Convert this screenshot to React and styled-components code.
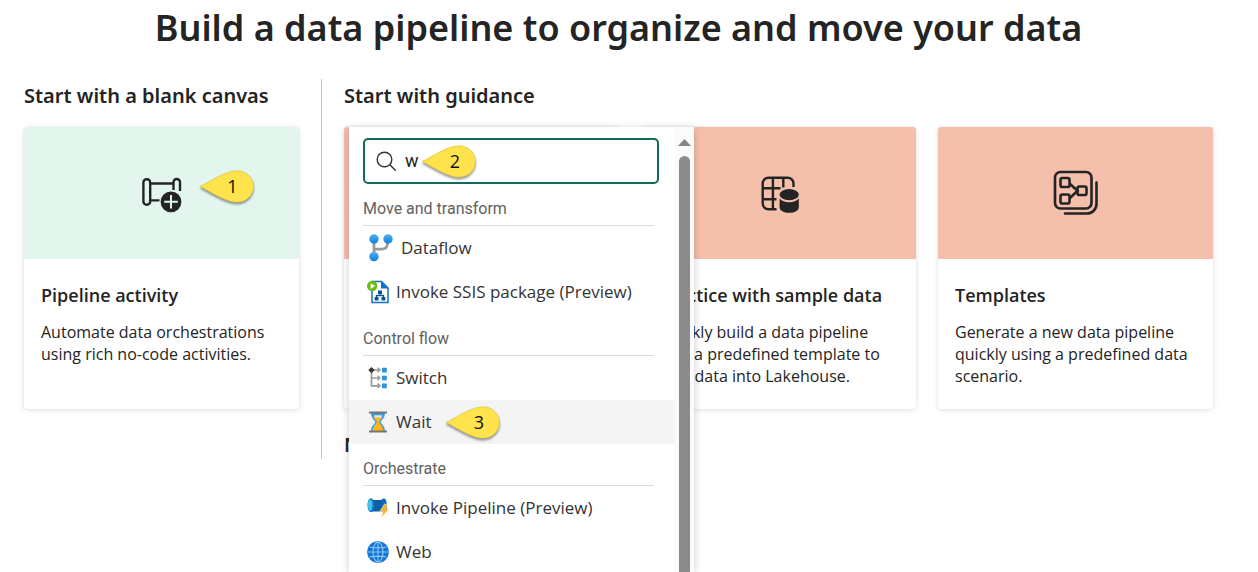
import React, { useState } from 'react';
import styled, { createGlobalStyle } from 'styled-components';

const GlobalStyle = createGlobalStyle`
  *, *::before, *::after { box-sizing: border-box; }
  body { margin: 0; background: #fff; color: #242424; font-family: 'Open Sans', 'Noto Sans', sans-serif; }
  h1, h2, h3, p, ul { margin: 0; padding: 0; }
`;

const Page = styled.main`
  min-height: 100vh;
  padding: 4px 45px 0 24px;
  overflow: hidden;
`;

const Title = styled.h1`
  font: 600 36px/48px 'Noto Sans', 'Open Sans', sans-serif;
  text-align: center;
  margin-bottom: 27px;
`;

const Columns = styled.div`
  display: grid;
  grid-template-columns: minmax(0, 1fr) 1px repeat(3, minmax(0, 1fr));
  column-gap: 22px;
`;

const Divider = styled.div`
  background: #c8c8c8;
`;

const Section = styled.section`
  grid-column: span ${(p) => p.$span};
  display: grid;
  grid-template-columns: subgrid;
  align-content: start;
  padding-top: 3px;
`;

const SectionTitle = styled.h2`
  grid-column: 1 / -1;
  font: 600 20px/28px 'Noto Sans', 'Open Sans', sans-serif;
  margin-bottom: ${(p) => (p.$last ? 0 : 17)}px;
`;

const CardRow = styled.div`
  position: relative;
  grid-column: 1 / -1;
  display: grid;
  grid-template-columns: subgrid;
  margin-bottom: 22px;
`;

const Card = styled.article`
  display: flex;
  flex-direction: column;
  min-height: 282px;
  border-radius: 3px;
  background: #fff;
  box-shadow: 0 0 2px rgba(0, 0, 0, 0.1), 0 1px 6px rgba(0, 0, 0, 0.1);
`;

const Hero = styled.div`
  position: relative;
  display: flex;
  align-items: center;
  justify-content: center;
  height: 132px;
  padding-top: 4px;
  border-radius: 3px 3px 0 0;
  background: ${(p) => p.$color};
`;

const CardBody = styled.div`
  display: flex;
  flex-direction: column;
  gap: 13px;
  padding: 23px 16px 22px 17px;
`;

const CardTitle = styled.h3`
  font-size: 18px;
  font-weight: 600;
  line-height: 26px;
`;

const CardText = styled.p`
  font-size: 16px;
  line-height: 22px;
`;

const Menu = styled.div`
  position: absolute;
  z-index: 1;
  top: 0;
  left: 5px;
  width: 345px;
  height: calc(100vh - 127px);
  display: flex;
  overflow: hidden;
  background: #fff;
  box-shadow: 0 2px 8px rgba(0, 0, 0, 0.2);
`;

const MenuContent = styled.div`
  flex: 1;
  padding-top: 11px;
`;

const SearchBox = styled.label`
  position: relative;
  display: flex;
  align-items: center;
  gap: 8px;
  height: 46px;
  margin: 0 16px 0 14px;
  padding: 0 11px;
  border: 2px solid #0f6b5b;
  border-radius: 5px;
  background: #fff;
`;

const SearchInput = styled.input`
  flex: 1;
  min-width: 0;
  padding: 0;
  border: 0;
  outline: 0;
  background: transparent;
  color: #242424;
  font: 18px/24px Roboto, sans-serif;
`;

const GroupTitle = styled.h3`
  height: 42px;
  margin: 0 21px 0 14px;
  padding-top: 14px;
  border-bottom: 1px solid #dcdcdc;
  color: #616161;
  font: 400 16px/22px Roboto, sans-serif;
`;

const List = styled.ul`
  list-style: none;
`;

const Item = styled.li`
  position: relative;
`;

const ItemButton = styled.button`
  display: flex;
  align-items: center;
  gap: 7px;
  width: 100%;
  height: 44px;
  padding: 0 0 0 18px;
  border: 0;
  background: ${(p) => (p.$active ? '#f4f4f4' : '#fff')};
  color: #333;
  font: 400 17px/24px 'Open Sans', 'Noto Sans', sans-serif;
  text-align: left;
  white-space: nowrap;
  cursor: pointer;
`;

const Scrollbar = styled.div`
  display: flex;
  flex-direction: column;
  align-items: center;
  gap: 10px;
  width: 19px;
  padding: 12px 0 0 0;
  background: #fbfbfb;
`;

const ScrollUp = styled.button`
  display: flex;
  padding: 0;
  border: 0;
  background: none;
`;

const Thumb = styled.div`
  flex: 1;
  width: 11px;
  border-radius: 6px 6px 0 0;
  background: #8b8b8b;
`;

const Pin = styled.span`
  position: absolute;
  top: ${(p) => p.$top};
  left: ${(p) => p.$left};
  width: 54px;
  height: 34px;
  padding-left: 12px;
  color: #111;
  font: 18px/32px 'Open Sans', sans-serif;
  text-align: center;
`;

const PinShape = styled.svg`
  position: absolute;
  inset: 0;
  overflow: visible;
  filter: drop-shadow(0 2px 1px rgba(0, 0, 0, 0.4));
`;

const PinLabel = styled.span`
  position: relative;
`;

function Callout({ n, top, left }) {
  return (
    <Pin $top={top} $left={left}>
      <PinShape width="54" height="34" viewBox="0 0 54 34" aria-hidden="true">
        <path d="M0 16.500C9 12.500 25 .8 37 .8C46.500 .8 53.500 8 53.500 16.500S46.500 32.200 37 32.200C25 32.200 9 20.500 0 16.500Z" fill="#fee34c" stroke="#d9bf3a" strokeWidth=".6" />
      </PinShape>
      <PinLabel>{n}</PinLabel>
    </Pin>
  );
}

const PipelineIcon = () => (
  <svg width="40" height="36" viewBox="0 0 40 36" fill="none" stroke="#242424" strokeWidth="2.400" aria-hidden="true">
    <rect x="1.400" y="2.200" width="6.800" height="25.500" rx="3.200" />
    <path d="M8 6.500H31.500M8 23.400H17.500" />
    <path d="M31.500 13V5.200A3.200 3.200 0 0 1 38 5.200V14" />
    <circle cx="29" cy="24.800" r="10.400" fill="#242424" stroke="none" />
    <path d="M29 18V31.600M22.200 24.800H35.800" stroke="#e2f6ee" strokeWidth="2" />
  </svg>
);

const SampleIcon = () => (
  <svg width="40" height="38" viewBox="-1.500 0 40 38" fill="none" stroke="#242424" strokeWidth="2.400" aria-hidden="true">
    <path d="M33 11V7.500A5.800 5.800 0 0 0 27.200 1.700H8A5.800 5.800 0 0 0 2.200 7.500V27.500A5.800 5.800 0 0 0 8 33.300H16" />
    <path d="M12.400 2V33M22.800 2V11.500M2 12.200H20M2 23.200H16" />
    <g fill="#242424" stroke="none">
      <ellipse cx="28.700" cy="18.600" rx="9.600" ry="5.600" />
      <path d="M19.100 22.600C22.400 27.500 35 27.500 38.300 22.600V31.500C38.300 34.600 34 36.800 28.700 36.800S19.100 34.600 19.100 31.500Z" />
    </g>
  </svg>
);

const TemplatesIcon = () => (
  <svg width="46" height="50" viewBox="0 0 46 50" fill="none" stroke="#242424" strokeWidth="2.600" aria-hidden="true">
    <rect x="2" y="2" width="36.500" height="36.500" rx="5.500" />
    <path d="M43.500 12.500V34A9.500 9.500 0 0 1 34 43.500H12" strokeLinecap="round" />
    <rect x="7.500" y="8" width="9" height="9" rx="1.800" />
    <rect x="7.500" y="24.500" width="9" height="9" rx="1.800" />
    <rect x="24.500" y="16.500" width="9" height="8.500" rx="1.800" />
    <path d="M16.500 13.500L24.500 20.800L16.500 28.500" />
  </svg>
);

const SearchIcon = () => (
  <svg width="21" height="21" viewBox="0 0 21 21" fill="none" stroke="#333" strokeWidth="1.400" aria-hidden="true">
    <circle cx="8.500" cy="8.500" r="7.300" />
    <path d="M13.800 13.800L19.800 19.800" />
  </svg>
);

const DataflowIcon = () => (
  <svg width="27" height="28" viewBox="0 0 27 28" aria-hidden="true">
    <defs>
      <linearGradient id="node" x1="0" y1="0" x2="0" y2="1">
        <stop offset="0" stopColor="#4bb0f4" />
        <stop offset="1" stopColor="#1680dc" />
      </linearGradient>
    </defs>
    <path d="M7 5V23M7 15.200H14.500Q20.500 15.200 20.500 9V5" fill="none" stroke="#999" strokeWidth="2.700" />
    <circle cx="7" cy="5" r="4.700" fill="url(#node)" />
    <circle cx="21" cy="5" r="4.700" fill="url(#node)" />
    <circle cx="7" cy="22.600" r="4.700" fill="url(#node)" />
  </svg>
);

const SsisIcon = () => (
  <svg width="22" height="24" viewBox="0 0 22 24" aria-hidden="true">
    <path d="M5 1.500H14.500L21 8V22.500H5Z" fill="#fff" stroke="#1372c8" strokeWidth="1.500" />
    <path d="M14 1V8.500H21.500Z" fill="#1372c8" />
    <path d="M13 13V15.500M9.500 18V15.500H16.500V18" fill="none" stroke="#0c4f96" strokeWidth="1.300" />
    <path d="M11 10.500H15V14H11ZM7.700 17H11.500V20.500H7.700ZM14.500 17H18.300V20.500H14.500Z" fill="#0c4f96" />
    <circle cx="5.200" cy="6" r="5.200" fill="#6fbb1e" />
    <path d="M3.600 3.200L8.200 6L3.600 8.800Z" fill="#fff" />
  </svg>
);

const SwitchIcon = () => (
  <svg width="22" height="22" viewBox="0 0 22 22" aria-hidden="true">
    <path d="M4.500 3V18.800H12M4.500 11H12M4.500 3H12" fill="none" stroke="#999" strokeWidth="1.700" />
    <path d="M10.500 .8L13 3L10.500 5.200M10.500 8.800L13 11L10.500 13.200M10.500 16.600L13 18.800L10.500 21" fill="none" stroke="#999" strokeWidth="1.400" />
    <path d="M4.500 0L7.700 3L4.500 6.200L1.300 3Z" fill="#333" />
    <path d="M15 .8H19.800V5.400H15ZM15 8.700H19.800V13.300H15ZM15 16.600H19.800V21.200H15Z" fill="#2b93e4" />
  </svg>
);

const WaitIcon = () => (
  <svg width="22" height="22" viewBox="0 0 22 22" aria-hidden="true">
    <path d="M4 2H18C18 7 14.500 9 13.500 11C14.500 13 18 15 18 20H4C4 15 7.500 13 8.500 11C7.500 9 4 7 4 2Z" fill="#3c9be8" />
    <path d="M6.500 5.500H15.500C15 8 12.600 9 12 11C12.600 12.800 16 15 16.500 20H5.500C6 15 9.400 12.800 10 11C9.400 9 7 8 6.500 5.500Z" fill="#fdb714" />
    <path d="M7 4.200H15L14.200 6.500H7.800Z" fill="#d7ecfb" />
    <path d="M2 .6H20V2.600H2ZM2 19.400H20V21.400H2Z" fill="#777" />
  </svg>
);

const InvokeIcon = () => (
  <svg width="22" height="22" viewBox="0 0 22 22" aria-hidden="true">
    <path d="M4 3H17V14.500H4Z" fill="#0f5ea9" />
    <path d="M14.500 2.200Q15 1.500 17.500 1.500Q19.800 2.500 19.800 8V13H15.500Z" fill="#0f6bbd" />
    <ellipse cx="4" cy="8.200" rx="3.500" ry="7" fill="#1672c4" />
    <ellipse cx="3.200" cy="8.200" rx="2.300" ry="5.800" fill="#43c3ef" />
    <path d="M17.500 7L12.800 14.300H16.200L14.300 20.800L22 11.700H18.400L20.500 7Z" fill="#fbaf24" stroke="#fff" strokeWidth=".4" />
  </svg>
);

const WebIcon = () => (
  <svg width="22" height="22" viewBox="0 0 22 22" aria-hidden="true">
    <circle cx="11" cy="11" r="10.800" fill="#1373d6" />
    <g fill="none" stroke="#8ec9f7" strokeWidth="1.100">
      <ellipse cx="11" cy="11" rx="5" ry="10" />
      <path d="M11 1V21M1 11H21M2.600 6Q11 7.800 19.400 6M2.600 16Q11 14.200 19.400 16" />
    </g>
  </svg>
);

const groups = [
  {
    title: 'Move and transform',
    items: [
      { label: 'Dataflow', icon: DataflowIcon },
      { label: 'Invoke SSIS package (Preview)', icon: SsisIcon },
    ],
  },
  {
    title: 'Control flow',
    items: [
      { label: 'Switch', icon: SwitchIcon },
      { label: 'Wait', icon: WaitIcon, active: true },
    ],
  },
  {
    title: 'Orchestrate',
    items: [
      { label: 'Invoke Pipeline (Preview)', icon: InvokeIcon },
      { label: 'Web', icon: WebIcon },
    ],
  },
];

function StartCard({ color, icon, title, children, callout }) {
  return (
    <Card>
      <Hero $color={color}>
        {icon}
        {callout}
      </Hero>
      {title && (
        <CardBody>
          <CardTitle>{title}</CardTitle>
          <CardText>{children}</CardText>
        </CardBody>
      )}
    </Card>
  );
}

function ActivityMenu() {
  const [query, setQuery] = useState('w');
  return (
    <Menu>
      <MenuContent>
        <SearchBox>
          <SearchIcon />
          <SearchInput aria-label="Search activities" value={query} onChange={(e) => setQuery(e.target.value)} />
          <Callout n="2" top="5px" left="57px" />
        </SearchBox>
        {groups.map((group) => (
          <section key={group.title}>
            <GroupTitle>{group.title}</GroupTitle>
            <List>
              {group.items.map(({ label, icon: Icon, active }) => (
                <Item key={label}>
                  <ItemButton type="button" $active={active}>
                    <Icon />
                    {label}
                  </ItemButton>
                  {active && <Callout n="3" top="6px" left="97px" />}
                </Item>
              ))}
            </List>
          </section>
        ))}
      </MenuContent>
      <Scrollbar>
        <ScrollUp type="button" aria-label="Scroll up">
          <svg width="13" height="7" viewBox="0 0 13 7" aria-hidden="true">
            <path d="M6.500 0L13 7H0Z" fill="#858585" />
          </svg>
        </ScrollUp>
        <Thumb />
      </Scrollbar>
    </Menu>
  );
}

export default function App() {
  return (
    <Page>
      <GlobalStyle />
      <Title>Build a data pipeline to organize and move your data</Title>
      <Columns>
        <Section $span={1}>
          <SectionTitle>Start with a blank canvas</SectionTitle>
          <CardRow>
            <StartCard
              color="#e2f6ee"
              icon={<PipelineIcon />}
              title="Pipeline activity"
              callout={<Callout n="1" top="43px" left="calc(50% + 38px)" />}
            >
              Automate data orchestrations using rich no-code activities.
            </StartCard>
          </CardRow>
        </Section>
        <Divider />
        <Section $span={3}>
          <SectionTitle>Start with guidance</SectionTitle>
          <CardRow>
            <StartCard color="#f4bfab" />
            <StartCard color="#f4bfab" icon={<SampleIcon />} title="Practice with sample data">
              Quickly build a data pipeline with a predefined template to load data into Lakehouse.
            </StartCard>
            <StartCard color="#f4bfab" icon={<TemplatesIcon />} title="Templates">
              Generate a new data pipeline quickly using a predefined data scenario.
            </StartCard>
            <ActivityMenu />
          </CardRow>
          <SectionTitle $last>N</SectionTitle>
        </Section>
      </Columns>
    </Page>
  );
}
